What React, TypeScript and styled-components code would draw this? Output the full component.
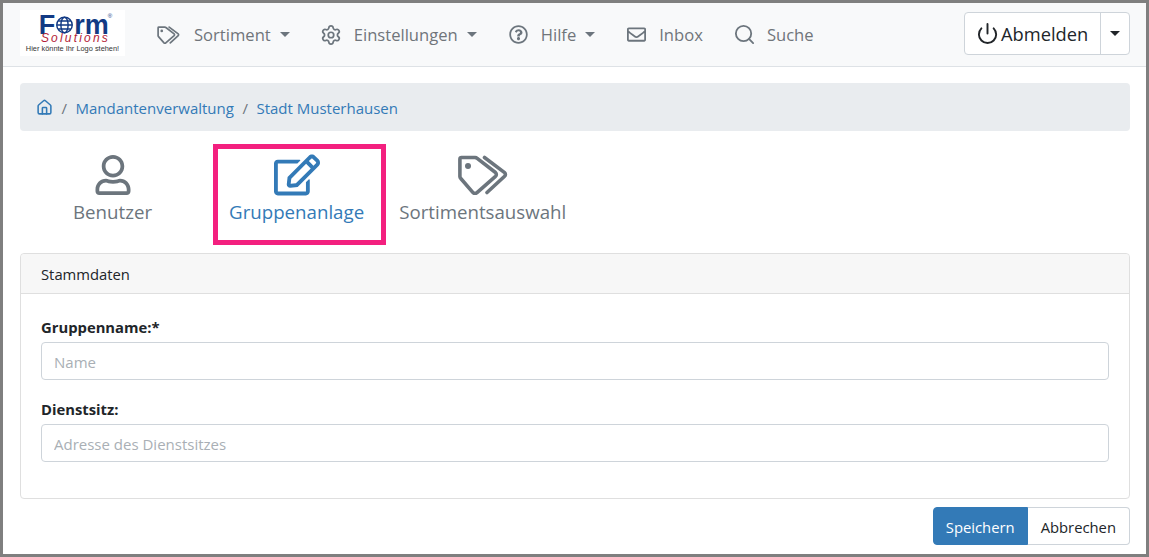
import React from 'react';
import styled, { createGlobalStyle } from 'styled-components';
import { Search, Settings, Power, House } from 'lucide-react';
import { FaRegEdit, FaRegEnvelope, FaRegQuestionCircle, FaRegUser } from 'react-icons/fa';

const GlobalStyle = createGlobalStyle`
  html, body {
    margin: 0;
    height: 100%;
    background: #fff;
  }
  * {
    box-sizing: border-box;
  }
  body {
    font-family: "Open Sans", "Noto Sans", "Liberation Sans", sans-serif;
    font-size: 15px;
    color: #212529;
  }
`;

const Frame = styled.div`
  height: 100vh;
  border: 3px solid #7f7f7f;
  overflow: hidden;
`;

const Navbar = styled.nav`
  height: 64px;
  display: flex;
  align-items: center;
  padding: 0 16px 0 17px;
  background-color: #f8f9fa;
  border-bottom: 1px solid #dee2e6;
`;

const Logo = styled.div`
  width: 105px;
  height: 46px;
  flex: none;
  margin: 0 16px 3px 0;
  padding: 6px 0 0 6px;
  display: flex;
  flex-direction: column;
  align-items: center;
  background: #fff;
`;

const LogoWord = styled.div`
  display: flex;
  align-items: center;
  height: 18px;
  font-family: "Liberation Sans", sans-serif;
  font-size: 27px;
  font-weight: 700;
  line-height: 18px;
  color: #123a84;
`;

const LogoMark = styled.sup`
  align-self: flex-start;
  margin: -3px 0 0 -1px;
  font-size: 6px;
  line-height: 6px;
  font-weight: 400;
`;

const LogoSub = styled.div`
  height: 9px;
  font-family: "Liberation Sans", sans-serif;
  font-size: 12px;
  font-style: italic;
  line-height: 9px;
  letter-spacing: 2.2px;
  color: #b41e38;
`;

const LogoClaim = styled.div`
  margin: 1px 0 0 -6px;
  font-family: "Liberation Sans", sans-serif;
  font-size: 7.4px;
  line-height: 9px;
  white-space: nowrap;
  color: #333;
`;

const NavItem = styled.a`
  display: flex;
  align-items: center;
  padding: 0 16px;
  color: #70757a;
  font-size: 16.6px;
  white-space: nowrap;
  cursor: pointer;
`;

const NavIcon = styled.span<{ $wide?: boolean }>`
  display: flex;
  align-items: center;
  justify-content: center;
  width: ${props => (props.$wide ? '23px' : '19px')};
  margin-right: ${props => (props.$wide ? '14px' : '13px')};
  color: #6c757d;

  svg {
    flex: none;
  }
`;

const Caret = styled.span<{ $dark?: boolean }>`
  width: 0;
  height: 0;
  margin-left: 9px;
  border-top: 5px solid ${props => (props.$dark ? '#212529' : '#6c757d')};
  border-left: 5px solid transparent;
  border-right: 5px solid transparent;
`;

const LogoutGroup = styled.div`
  display: flex;
  height: 43px;
  margin: 0 0 3px auto;
  background: #fff;
  border: 1px solid #ced4da;
  border-radius: 4px;
`;

const LogoutButton = styled.button`
  display: flex;
  align-items: center;
  gap: 2px;
  width: 136px;
  padding: 0 0 0 11px;
  background: none;
  border: none;
  border-right: 1px solid #ced4da;
  color: #212529;
  font-family: inherit;
  font-size: 18.3px;
`;

const LogoutCaret = styled.button`
  display: flex;
  align-items: center;
  justify-content: center;
  flex: 1;
  width: 28px;
  padding: 0;
  background: none;
  border: none;

  ${Caret} {
    margin-left: 0;
  }
`;

const Content = styled.main`
  padding: 16px 16px 0 17px;
`;

const Breadcrumb = styled.div`
  display: flex;
  align-items: center;
  height: 48px;
  padding: 1px 16px 0;
  background-color: #e9ecef;
  border-radius: 4px;
  font-size: 15px;
`;

const Crumb = styled.a`
  display: flex;
  align-items: center;
  color: #337ab7;
`;

const Separator = styled.span`
  padding: 0 8.5px;
  color: #6c757d;
`;

const Tabs = styled.div`
  display: flex;
  height: 101px;
  margin-top: 13px;
  padding-left: 53px;
`;

const Tab = styled.a<{ $active?: boolean }>`
  display: flex;
  flex-direction: column;
  align-items: center;
  padding-top: ${props => (props.$active ? '6px' : '11px')};
  margin-right: ${props => (props.$active ? '13px' : '61px')};
  padding-left: ${props => (props.$active ? '11px' : '0')};
  padding-right: ${props => (props.$active ? '17px' : '0')};
  color: ${props => (props.$active ? '#337ab7' : '#6c757d')};
  border: ${props => (props.$active ? '5px solid #f3207f' : 'none')};
  font-size: 18.7px;
  white-space: nowrap;
`;

const TabIcon = styled.span`
  display: flex;
  align-items: center;
  justify-content: center;
  height: 40px;
  margin-bottom: 4px;
`;

const Card = styled.section`
  height: 246px;
  margin-top: 8px;
  border: 1px solid #dfdfdf;
  border-radius: 4px;
`;

const CardHeader = styled.div`
  display: flex;
  align-items: center;
  height: 40px;
  padding: 0 20px;
  background-color: #f7f7f7;
  border-bottom: 1px solid #dfdfdf;
  border-radius: 4px 4px 0 0;
  font-size: 14.8px;
`;

const CardBody = styled.div`
  display: flex;
  flex-direction: column;
  gap: 19px;
  padding: 23px 20px;
`;

const Field = styled.div`
  display: flex;
  flex-direction: column;
  gap: 5px;
`;

const Label = styled.label`
  font-size: 14.8px;
  font-weight: 700;
  line-height: 20px;
  color: #212529;
`;

const Input = styled.input`
  height: 38px;
  padding: 1px 12px 0;
  background: #fff;
  border: 1px solid #ced4da;
  border-radius: 4px;
  color: #495057;
  font-family: inherit;
  font-size: 15px;

  &::placeholder {
    color: #a9afb5;
    opacity: 1;
  }
`;

const Actions = styled.div`
  display: flex;
  justify-content: flex-end;
  margin-top: 8px;
`;

const ActionButton = styled.button<{ $primary?: boolean }>`
  height: 38px;
  padding: 1px ${props => (props.$primary ? '12px' : '13px')} 0;
  background-color: ${props => (props.$primary ? '#337ab7' : '#fff')};
  color: ${props => (props.$primary ? '#fff' : '#212529')};
  border: 1px solid ${props => (props.$primary ? '#337ab7' : '#ced4da')};
  border-radius: ${props => (props.$primary ? '4px 0 0 4px' : '0 4px 4px 0')};
  border-left-width: ${props => (props.$primary ? '1px' : '0')};
  font-family: inherit;
  font-size: 14.8px;
`;

const Globe = () => (
  <svg width="19" height="18" viewBox="0 0 20 20" fill="none" stroke="#123a84" strokeWidth="1.6">
    <circle cx="10" cy="10" r="8.6" />
    <ellipse cx="10" cy="10" rx="4" ry="8.6" />
    <path d="M1.5 10h17M3 5.5h14M3 14.5h14" />
  </svg>
);

const TagsIcon: React.FC<{ width: number; height: number; weight: number }> = ({ width, height, weight }) => (
  <svg width={width} height={height} viewBox="0 0 50 40" fill="none" stroke="currentColor" strokeWidth={weight} strokeLinejoin="round" strokeLinecap="round">
    <path d="M3.5 2.5h13.5a3 3 0 0 1 2.2.9L37.5 17.5a2.6 2.6 0 0 1 0 3.8L19 37.6a2.8 2.8 0 0 1-4 0L2.8 23.5a3 3 0 0 1-.9-2.1V4a1.6 1.6 0 0 1 1.6-1.5z" />
    <path d="M26.5 2.5L46.6 17.6a2.4 2.4 0 0 1 0 3.6L29 37.5" />
    <circle cx="10" cy="11" r="3" fill="currentColor" stroke="none" />
  </svg>
);

const App: React.FC = () => {
  return (
    <Frame>
      <GlobalStyle />
      <Navbar>
        <Logo>
          <LogoWord>
            F<Globe />rm<LogoMark>®</LogoMark>
          </LogoWord>
          <LogoSub>Solutions</LogoSub>
          <LogoClaim>Hier könnte Ihr Logo stehen!</LogoClaim>
        </Logo>
        <NavItem>
          <NavIcon $wide><TagsIcon width={23} height={18} weight={3.8} /></NavIcon>
          Sortiment
          <Caret />
        </NavItem>
        <NavItem>
          <NavIcon><Settings size={22} strokeWidth={1.9} /></NavIcon>
          Einstellungen
          <Caret />
        </NavItem>
        <NavItem>
          <NavIcon><FaRegQuestionCircle size={19} /></NavIcon>
          Hilfe
          <Caret />
        </NavItem>
        <NavItem>
          <NavIcon><FaRegEnvelope size={19} /></NavIcon>
          Inbox
        </NavItem>
        <NavItem>
          <NavIcon><Search size={23} strokeWidth={1.9} /></NavIcon>
          Suche
        </NavItem>
        <LogoutGroup>
          <LogoutButton>
            <Power size={23} strokeWidth={2} />
            Abmelden
          </LogoutButton>
          <LogoutCaret><Caret $dark /></LogoutCaret>
        </LogoutGroup>
      </Navbar>

      <Content>
        <Breadcrumb>
          <Crumb><House size={17} strokeWidth={2.2} /></Crumb>
          <Separator>/</Separator>
          <Crumb>Mandantenverwaltung</Crumb>
          <Separator>/</Separator>
          <Crumb>Stadt Musterhausen</Crumb>
        </Breadcrumb>

        <Tabs>
          <Tab>
            <TabIcon><FaRegUser size={40} /></TabIcon>
            Benutzer
          </Tab>
          <Tab $active>
            <TabIcon><FaRegEdit size={46} /></TabIcon>
            Gruppenanlage
          </Tab>
          <Tab>
            <TabIcon><TagsIcon width={50} height={40} weight={3.6} /></TabIcon>
            Sortimentsauswahl
          </Tab>
        </Tabs>

        <Card>
          <CardHeader>Stammdaten</CardHeader>
          <CardBody>
            <Field>
              <Label>Gruppenname:*</Label>
              <Input placeholder="Name" />
            </Field>
            <Field>
              <Label>Dienstsitz:</Label>
              <Input placeholder="Adresse des Dienstsitzes" />
            </Field>
          </CardBody>
        </Card>

        <Actions>
          <ActionButton $primary>Speichern</ActionButton>
          <ActionButton>Abbrechen</ActionButton>
        </Actions>
      </Content>
    </Frame>
  );
};

export default App;
